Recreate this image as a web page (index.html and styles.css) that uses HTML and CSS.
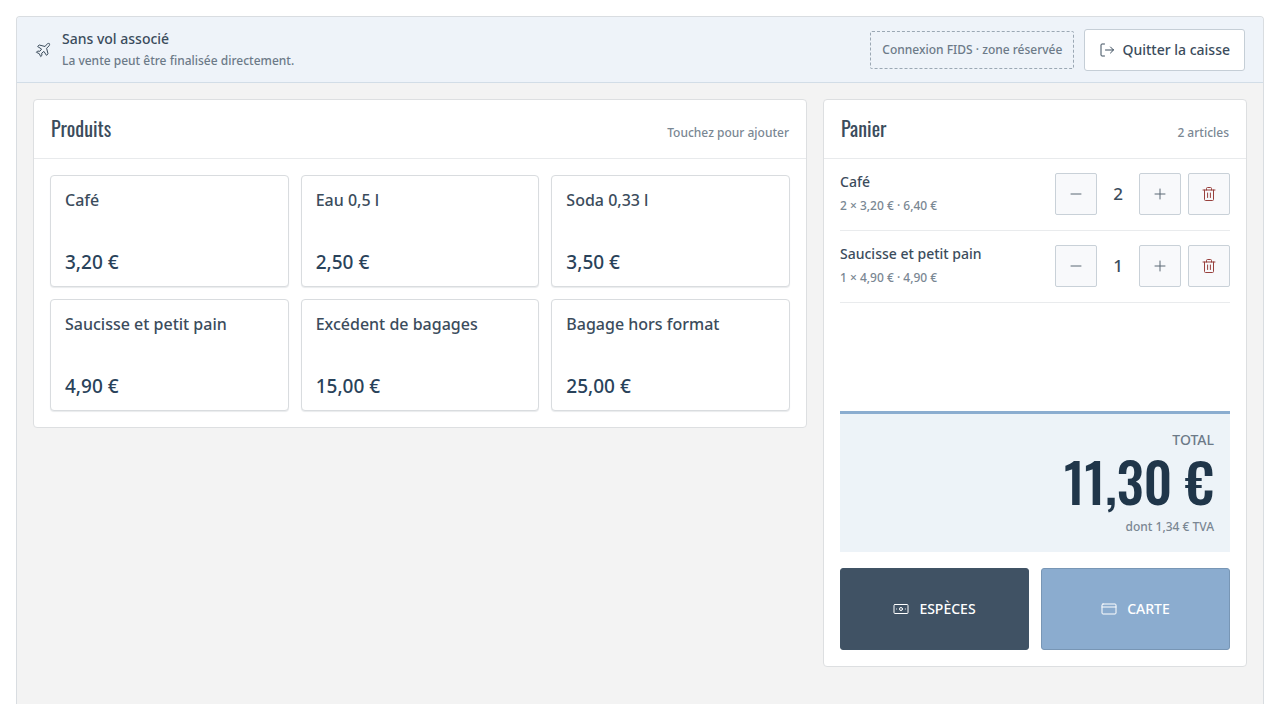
FILE: index.html
```html
<!DOCTYPE html>
<html lang="fr">
<head>
<meta charset="utf-8">
<meta name="viewport" content="width=device-width, initial-scale=1">
<title>Caisse</title>
<link rel="stylesheet" href="styles.css">
</head>
<body>
<svg class="sprite" aria-hidden="true">
  <symbol id="minus" viewBox="0 0 16 16"><path d="M3 8h10"/></symbol>
  <symbol id="plus" viewBox="0 0 16 16"><path d="M3 8h10M8 3v10"/></symbol>
  <symbol id="trash" viewBox="0 0 16 16"><path d="M2 4h12M3.500 4v9.500a1 1 0 0 0 1 1h7a1 1 0 0 0 1-1V4M5.500 4V2.500a1 1 0 0 1 1-1h3a1 1 0 0 1 1 1V4M6.600 7v4.500M9.400 7v4.500"/></symbol>
</svg>
<div class="register">
  <header class="topbar">
    <div class="flight">
      <svg class="icon" viewBox="0 0 16 16" aria-hidden="true"><path d="M9.700 4.400 4.200 3 2.600 4.500 6.600 7.100 4.800 9.300 2.700 9 1.400 10.300 4.300 11.700 5.700 14.600 7 13.300 6.700 11.200 8.900 9.400 11.500 13.400 13 11.800 11.600 6.300 13.900 4C14.800 3 14.700 2 14.400 1.600 14 1.300 13 1.200 12 2.100Z"/></svg>
      <div>
        <p class="flight-title">Sans vol associé</p>
        <p class="note">La vente peut être finalisée directement.</p>
      </div>
    </div>
    <div class="actions">
      <span class="reserved">Connexion FIDS · zone réservée</span>
      <button class="quit" type="button">
        <svg class="icon" viewBox="0 0 16 16" aria-hidden="true"><path d="M5.500 2H3a1 1 0 0 0-1 1v10a1 1 0 0 0 1 1h2.500M6.500 8h8M11.500 5l3 3-3 3"/></svg>
        Quitter la caisse
      </button>
    </div>
  </header>
  <main class="content">
    <section class="card" aria-labelledby="products-title">
      <div class="card-head"><h2 id="products-title">Produits</h2><span class="hint">Touchez pour ajouter</span></div>
      <div class="products">
        <button class="product" type="button"><span>Café</span><span class="price">3,20 €</span></button>
        <button class="product" type="button"><span>Eau 0,5 l</span><span class="price">2,50 €</span></button>
        <button class="product" type="button"><span>Soda 0,33 l</span><span class="price">3,50 €</span></button>
        <button class="product" type="button"><span>Saucisse et petit pain</span><span class="price">4,90 €</span></button>
        <button class="product" type="button"><span>Excédent de bagages</span><span class="price">15,00 €</span></button>
        <button class="product" type="button"><span>Bagage hors format</span><span class="price">25,00 €</span></button>
      </div>
    </section>
    <section class="card" aria-labelledby="cart-title">
      <div class="card-head"><h2 id="cart-title">Panier</h2><span class="hint">2 articles</span></div>
      <div class="cart">
        <ul class="lines">
          <li class="line">
            <div class="line-info"><p>Café</p><p class="hint">2 × 3,20 € · 6,40 €</p></div>
            <div class="stepper">
              <button class="square" type="button" aria-label="Retirer un Café"><svg class="icon" aria-hidden="true"><use href="#minus"/></svg></button>
              <span class="qty">2</span>
              <button class="square" type="button" aria-label="Ajouter un Café"><svg class="icon" aria-hidden="true"><use href="#plus"/></svg></button>
            </div>
            <button class="square remove" type="button" aria-label="Supprimer Café"><svg class="icon" aria-hidden="true"><use href="#trash"/></svg></button>
          </li>
          <li class="line">
            <div class="line-info"><p>Saucisse et petit pain</p><p class="hint">1 × 4,90 € · 4,90 €</p></div>
            <div class="stepper">
              <button class="square" type="button" aria-label="Retirer un Saucisse et petit pain"><svg class="icon" aria-hidden="true"><use href="#minus"/></svg></button>
              <span class="qty">1</span>
              <button class="square" type="button" aria-label="Ajouter un Saucisse et petit pain"><svg class="icon" aria-hidden="true"><use href="#plus"/></svg></button>
            </div>
            <button class="square remove" type="button" aria-label="Supprimer Saucisse et petit pain"><svg class="icon" aria-hidden="true"><use href="#trash"/></svg></button>
          </li>
        </ul>
        <div class="total">
          <span class="total-label">TOTAL</span>
          <strong class="amount">11,30 €</strong>
          <span class="hint">dont 1,34 € TVA</span>
        </div>
        <div class="payments">
          <button class="pay cash" type="button"><svg class="icon" viewBox="0 0 16 16" aria-hidden="true"><rect x="1" y="3.500" width="14" height="9" rx="1"/><circle cx="8" cy="8" r="1.500"/><path d="M3.600 8h.1M12.300 8h.1"/></svg>ESPÈCES</button>
          <button class="pay bank-card" type="button"><svg class="icon" viewBox="0 0 16 16" aria-hidden="true"><rect x="1" y="3" width="14" height="10" rx="1"/><path d="M1 6h14"/></svg>CARTE</button>
        </div>
      </div>
    </section>
  </main>
</div>
</body>
</html>
```

FILE: styles.css
```css
* { box-sizing: border-box; }

body {
  margin: 0;
  padding: 16px 16px 0;
  background: #fff;
  color: #3b4c5c;
  font: 500 14px/20px "Noto Sans", "Open Sans", sans-serif;
}

p, h2, ul { margin: 0; padding: 0; }
ul { list-style: none; }
button { margin: 0; font: inherit; color: inherit; cursor: pointer; }

.sprite { display: none; }

.icon {
  width: 16px;
  height: 16px;
  flex: none;
  fill: none;
  stroke: currentColor;
  stroke-width: 1;
  stroke-linecap: round;
  stroke-linejoin: round;
}

.register {
  min-height: calc(100vh - 32px);
  border: 1px solid #d9dde1;
  border-bottom: 0;
  border-radius: 4px 4px 0 0;
  background: #f3f3f3;
}

.topbar {
  display: flex;
  align-items: center;
  justify-content: space-between;
  gap: 16px;
  padding: 11px 18px;
  border-bottom: 1px solid #d2dde7;
  border-radius: 3px 3px 0 0;
  background: #eef3f9;
}

.flight { display: flex; align-items: center; gap: 11px; }
.flight-title { line-height: 22px; }
.note { color: #6c7a88; font-size: 12px; line-height: 21px; }
.actions { display: flex; align-items: center; gap: 10px; }

.reserved {
  padding: 8px 11px;
  border: 1px dashed #9ba8b4;
  border-radius: 2px;
  color: #6c7a88;
  font-size: 12px;
}

.quit {
  display: flex;
  align-items: center;
  gap: 7px;
  padding: 10px 14px;
  border: 1px solid #c5ced6;
  border-radius: 3px;
  background: #fff;
}

.content {
  display: grid;
  grid-template-columns: minmax(0, 1fr) 424px;
  align-items: start;
  gap: 16px;
  padding: 16px;
}

.card {
  border: 1px solid #dddfe1;
  border-radius: 4px;
  background: #fff;
}

.card-head {
  display: flex;
  align-items: baseline;
  justify-content: space-between;
  padding: 14px 17px 16px;
  border-bottom: 1px solid #e8eaec;
}

.card-head h2 { font: 400 20px/28px Oswald, "Liberation Sans Narrow", sans-serif; }

.hint { color: #7a8793; font-size: 12px; line-height: 18px; }

.products {
  display: grid;
  grid-template-columns: repeat(3, minmax(0, 1fr));
  gap: 12px;
  padding: 16px;
}

.product {
  display: flex;
  flex-direction: column;
  align-items: flex-start;
  justify-content: space-between;
  min-height: 112px;
  padding: 12px 14px;
  border: 1px solid #d9dcdf;
  border-radius: 4px;
  background: #fff;
  box-shadow: 0 1px 1px #e9ebed;
  font-size: 16px;
  line-height: 24px;
  text-align: left;
}

.price { color: #29425a; font-size: 19px; }

.cart { padding: 0 16px 16px; }
.lines { min-height: 236px; margin-bottom: 16px; }

.line {
  display: flex;
  align-items: center;
  gap: 7px;
  padding: 14px 0 15px;
  border-bottom: 1px solid #e9ebed;
}

.line-info {
  flex: 1;
  display: grid;
  gap: 6px;
  line-height: 18px;
}

.stepper { display: flex; align-items: center; }
.qty { width: 42px; text-align: center; font-size: 17px; }

.square {
  display: grid;
  place-items: center;
  width: 42px;
  height: 42px;
  padding: 0;
  border: 1px solid #c9d1d8;
  border-radius: 2px;
  background: #f8f9fb;
  color: #5b6875;
}

.remove { color: #98413d; }

.total {
  display: flex;
  flex-direction: column;
  align-items: flex-end;
  padding: 16px;
  border-top: 3px solid #8badd0;
  background: #edf3f8;
}

.total-label { color: #6c7a88; }

.amount {
  margin-bottom: 6px;
  color: #20364a;
  font: 500 54px/62px Oswald, "Liberation Sans Narrow", sans-serif;
}

.payments {
  display: grid;
  grid-template-columns: 1fr 1fr;
  gap: 12px;
  padding-top: 16px;
}

.pay {
  display: flex;
  align-items: center;
  justify-content: center;
  gap: 10px;
  min-height: 82px;
  border: 1px solid #405365;
  border-radius: 3px;
  background: #405264;
  color: #fff;
}

.bank-card { border-color: #7896b5; background: #8baccf; }
```
